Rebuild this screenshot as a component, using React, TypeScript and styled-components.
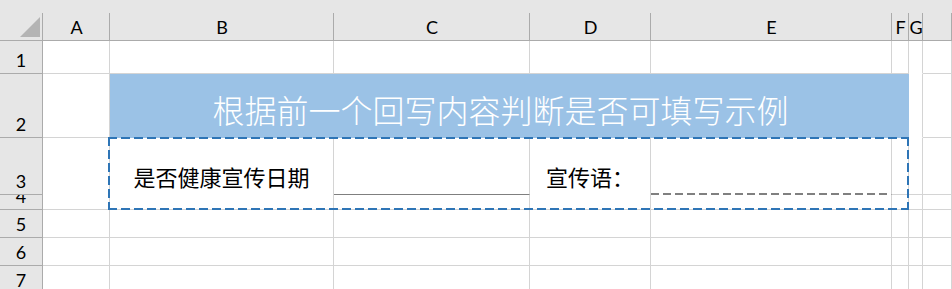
import React from "react";
import styled, { createGlobalStyle, css } from "styled-components";

const GRID = "#d4d4d4";
const HEAD_LINE = "#ababab";
const HEAD_BG = "#e6e6e6";
const BLUE_FILL = "#9bc2e6";
const BLUE_DASH = "#2e75b6";

const GlobalStyle = createGlobalStyle`
  html, body {
    margin: 0;
    padding: 0;
    background: #ffffff;
    overflow: hidden;
  }
  body {
    font-family: "Noto Sans CJK SC", "Noto Sans", sans-serif;
  }
`;

const Sheet = styled.div`
  display: grid;
  grid-template-columns: 43px 67px 224px 196px 121px 241px 17px 14px 1fr;
  grid-template-rows: 41px 33px 64px 57px 15px 28px 28px 28px;
  width: 952px;
  height: 289px;
  overflow: hidden;
`;

const headFont = css`
  font-family: Lato, "Liberation Sans", sans-serif;
  font-size: 18px;
  line-height: 1;
  color: #000000;
`;

const Corner = styled.div`
  grid-column: 1;
  grid-row: 1;
  display: flex;
  align-items: flex-end;
  justify-content: flex-end;
  padding: 0 3px 3px 0;
  border-bottom: 1px solid ${HEAD_LINE};
  background: linear-gradient(${HEAD_LINE}, ${HEAD_LINE}) right bottom / 1px 27px
      no-repeat,
    ${HEAD_BG};
`;

const Triangle = styled.div`
  width: 20px;
  height: 20px;
  background: #b4b4b4;
  clip-path: polygon(100% 0, 100% 100%, 0 100%);
`;

const ColHead = styled.div<{ $c: number }>`
  grid-column: ${(p) => p.$c};
  grid-row: 1;
  display: flex;
  align-items: center;
  justify-content: center;
  padding-top: 13px;
  overflow: hidden;
  border-bottom: 1px solid ${HEAD_LINE};
  background: linear-gradient(${HEAD_LINE}, ${HEAD_LINE}) right bottom / 1px 27px
      no-repeat,
    ${HEAD_BG};
  ${headFont}
`;

const RowHead = styled.div<{ $r: number }>`
  grid-column: 1;
  grid-row: ${(p) => p.$r};
  display: flex;
  align-items: flex-end;
  justify-content: center;
  padding-bottom: 4px;
  overflow: hidden;
  background: ${HEAD_BG};
  border-right: 1px solid ${HEAD_LINE};
  border-bottom: 1px solid ${HEAD_LINE};
  ${headFont}
`;

type Bottom = "grid" | "none" | "solid" | "dashed";

interface CellProps {
  $c: number;
  $r: number;
  $cs?: number;
  $rs?: number;
  $noRight?: boolean;
  $bottom?: Bottom;
  $fill?: string;
}

const bottomLine = (b: Bottom = "grid") => {
  if (b === "solid") return "1px solid #7f7f7f";
  if (b === "grid") return `1px solid ${GRID}`;
  return "1px solid transparent";
};

const Cell = styled.div<CellProps>`
  grid-column: ${(p) => p.$c} / span ${(p) => p.$cs ?? 1};
  grid-row: ${(p) => p.$r} / span ${(p) => p.$rs ?? 1};
  box-sizing: border-box;
  min-width: 0;
  background-color: ${(p) => p.$fill ?? "#ffffff"};
  border-right: 1px solid ${(p) => (p.$noRight ? "transparent" : GRID)};
  border-bottom: ${(p) => bottomLine(p.$bottom)};
  ${(p) =>
    p.$bottom === "dashed" &&
    css`
      background-image: repeating-linear-gradient(
        90deg,
        #808080 0 8px,
        transparent 8px 12px
      );
      background-origin: border-box;
      background-position: left bottom;
      background-size: 100% 2px;
      background-repeat: no-repeat;
    `}
`;

const TitleCell = styled(Cell)`
  display: flex;
  align-items: center;
  justify-content: center;
  padding-top: 6px;
  color: #ffffff;
  font-size: 32px;
  font-weight: 300;
  line-height: 1;
  white-space: nowrap;
`;

const LabelCell = styled(Cell)`
  display: flex;
  align-items: center;
  justify-content: center;
  padding-top: 5px;
  color: #000000;
  font-size: 22px;
  line-height: 1;
  white-space: nowrap;
`;

const dash = (deg: string) =>
  `repeating-linear-gradient(${deg}, ${BLUE_DASH} 0 9px, transparent 9px 13px)`;

const CopyFrame = styled.div`
  grid-column: 3 / 8;
  grid-row: 4 / 6;
  margin: -1px 0 0 -2px;
  z-index: 2;
  pointer-events: none;
  background: ${dash("90deg")} left top / 100% 2px no-repeat,
    ${dash("90deg")} left bottom / 100% 2px no-repeat,
    ${dash("180deg")} left top / 2px 100% no-repeat,
    ${dash("180deg")} right top / 2px 100% no-repeat;
`;

const COLS = ["A", "B", "C", "D", "E", "F", "G", ""];
const ROWS = [1, 2, 3, 4, 5, 6, 7];

// cells drawn by hand below (row-col, col as grid line)
const SPECIAL = new Set([
  "1-8",
  "2-3", "2-4", "2-5", "2-6", "2-7", "2-8",
  "3-2", "3-3", "3-4", "3-5", "3-6",
  "4-2", "4-3", "4-5",
]);

const App = () => {
  const plain: React.ReactNode[] = [];
  ROWS.forEach((row) => {
    for (let c = 2; c <= 9; c++) {
      if (SPECIAL.has(`${row}-${c}`)) continue;
      plain.push(<Cell key={`${row}-${c}`} $c={c} $r={row + 1} />);
    }
  });

  return (
    <>
      <GlobalStyle />
      <Sheet>
        <Corner>
          <Triangle />
        </Corner>
        {COLS.map((name, i) => (
          <ColHead key={i} $c={i + 2}>
            {name}
          </ColHead>
        ))}
        {ROWS.map((row) => (
          <RowHead key={row} $r={row + 1}>
            {row}
          </RowHead>
        ))}

        {plain}

        <Cell $c={8} $r={2} $bottom="none" />

        <TitleCell $c={3} $r={3} $cs={4} $fill={BLUE_FILL} $noRight $bottom="none">
          根据前一个回写内容判断是否可填写示例
        </TitleCell>
        <Cell $c={7} $r={3} $fill={BLUE_FILL} $noRight $bottom="none" />
        <Cell $c={8} $r={3} $bottom="none" />

        <Cell $c={2} $r={4} $rs={2} />
        <LabelCell $c={3} $r={4} $rs={2}>
          是否健康宣传日期
        </LabelCell>
        <Cell $c={4} $r={4} $bottom="solid" />
        <LabelCell $c={5} $r={4} $rs={2}>
          宣传语：
        </LabelCell>
        <Cell $c={6} $r={4} $bottom="dashed" />

        <CopyFrame />
      </Sheet>
    </>
  );
};

export default App;
